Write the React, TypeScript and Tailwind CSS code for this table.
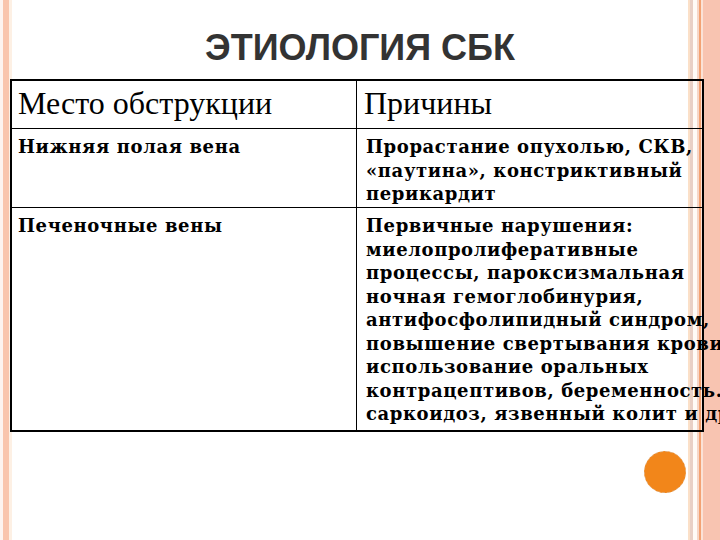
import React from 'react';

const rows = [
  {
    place: 'Нижняя полая вена',
    causes: ['Прорастание опухолью, СКВ,', '«паутина», констриктивный', 'перикардит'],
  },
  {
    place: 'Печеночные вены',
    causes: [
      'Первичные нарушения:',
      'миелопролиферативные',
      'процессы, пароксизмальная',
      'ночная гемоглобинурия,',
      'антифосфолипидный синдром,',
      'повышение свертывания крови,',
      'использование оральных',
      'контрацептивов, беременность.',
      'саркоидоз, язвенный колит и др.',
    ],
  },
];

export default function App() {
  return (
    <div className="relative w-[720px] h-[540px] overflow-hidden bg-[linear-gradient(to_right,#fdf4f0_0,#fdf4f0_3px,#f9c5ad_3px,#f9c5ad_9px,#fdf0e4_9px,#fdf0e4_12px,#fff_12px,#fff_688px,#fbe0c8_688px,#fbe0c8_690px,#e9cfc5_690px,#e9cfc5_693px,#fffaf6_693px,#fffaf6_697px,#f6d6c8_697px,#f6d6c8_699px,#f3a273_699px,#f3a273_701px,#fbe2d6_701px,#fbe2d6_703px,#f8c4b1_703px,#f8c4b1_100%)]">
      <div className="flex flex-col pl-[10px] pt-[28px]">
        <h1 className="w-[700px] text-center font-['Liberation_Sans',Arial,sans-serif] font-bold text-[36px] leading-[40px] text-[#333333]">
          ЭТИОЛОГИЯ СБК
        </h1>

        <div className="mt-[11px] w-[694px] border-2 border-black">
          <div className="flex h-[48px] border-b border-black font-['Liberation_Serif','Times_New_Roman',serif] text-[32px] text-black">
            <div className="w-[345px] shrink-0 border-r border-black pl-[6px] pt-[2px] leading-[40px]">Место обструкции</div>
            <div className="min-w-0 flex-1 pl-[7px] pt-[2px] leading-[40px]">Причины</div>
          </div>

          {rows.map((row, i) => (
            <div
              key={row.place}
              className={`flex font-['DejaVu_Serif',serif] font-bold text-[18px] leading-[23.5px] tracking-[0.6px] text-black ${i === 0 ? 'h-[79px] border-b border-black' : 'h-[222px]'}`}
            >
              <div className="w-[345px] shrink-0 border-r border-black pl-[6px] pt-[6px]">{row.place}</div>
              <div className="min-w-0 flex-1 pl-[9px] pt-[6px]">
                {row.causes.map((line) => (
                  <div key={line} className="whitespace-nowrap">{line}</div>
                ))}
              </div>
            </div>
          ))}
        </div>

        <div className="flex w-[694px] justify-end pr-[18px] pt-[19px]">
          <div className="w-[42px] h-[42px] rounded-full bg-[#f2861a] border border-dashed border-[#e0a060]" />
        </div>
      </div>
    </div>
  );
}
